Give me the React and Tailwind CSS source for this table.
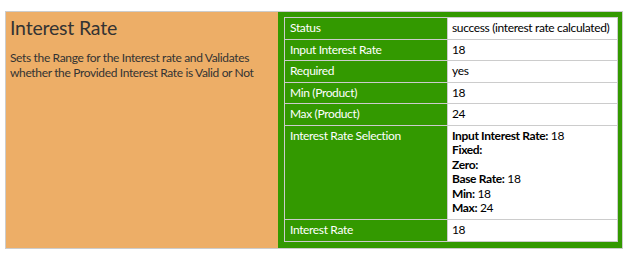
import React from "react";

const rows = [
  { label: "Status", value: "success (interest rate calculated)" },
  { label: "Input Interest Rate", value: "18" },
  { label: "Required", value: "yes" },
  { label: "Min (Product)", value: "18" },
  { label: "Max (Product)", value: "24" },
];

const selection = [
  ["Input Interest Rate:", " 18"],
  ["Fixed:", ""],
  ["Zero:", ""],
  ["Base Rate:", " 18"],
  ["Min:", " 18"],
  ["Max:", " 24"],
];

const labelCell =
  "border border-[#cccccc] px-[5px] pt-[3px] pb-[3px] align-top text-white w-[163px] whitespace-nowrap";
const valueCell =
  "border border-[#cccccc] px-[4px] pt-[3px] pb-[3px] align-top bg-white text-black whitespace-nowrap";

export default function App() {
  return (
    <div
      className="pt-[11px] pl-[5px] text-[12px] leading-[14.6px] tracking-[-0.35px]"
      style={{ fontFamily: "Lato, 'Liberation Sans', sans-serif" }}
    >
      <div className="flex w-[618px] border border-[#cccccc]">
        <div className="w-[272px] bg-[#edae67] px-[4px] pt-[3px] text-[#333333]">
          <h1 className="text-[19.5px] leading-[26px] font-normal tracking-[-0.2px]">
            Interest Rate
          </h1>
          <p className="mt-[10px] text-[12px] leading-[14.5px]">
            Sets the Range for the Interest rate and Validates whether the Provided Interest
            Rate is Valid or Not
          </p>
        </div>
        <div className="flex-1 bg-[#339900] pl-[6px] pt-[5px] pb-[6px]">
          <table className="w-[334px] border-collapse">
            <tbody>
              {rows.map((r) => (
                <tr key={r.label} className="h-[21px]">
                  <td className={labelCell}>{r.label}</td>
                  <td className={valueCell}>{r.value}</td>
                </tr>
              ))}
              <tr>
                <td className={labelCell}>Interest Rate Selection</td>
                <td className={valueCell + " leading-[14.5px]"}>
                  {selection.map(([k, v]) => (
                    <div key={k}>
                      <span className="font-bold">{k}</span>
                      {v}
                    </div>
                  ))}
                </td>
              </tr>
              <tr className="h-[21px]">
                <td className={labelCell}>Interest Rate</td>
                <td className={valueCell}>18</td>
              </tr>
            </tbody>
          </table>
        </div>
      </div>
    </div>
  );
}
